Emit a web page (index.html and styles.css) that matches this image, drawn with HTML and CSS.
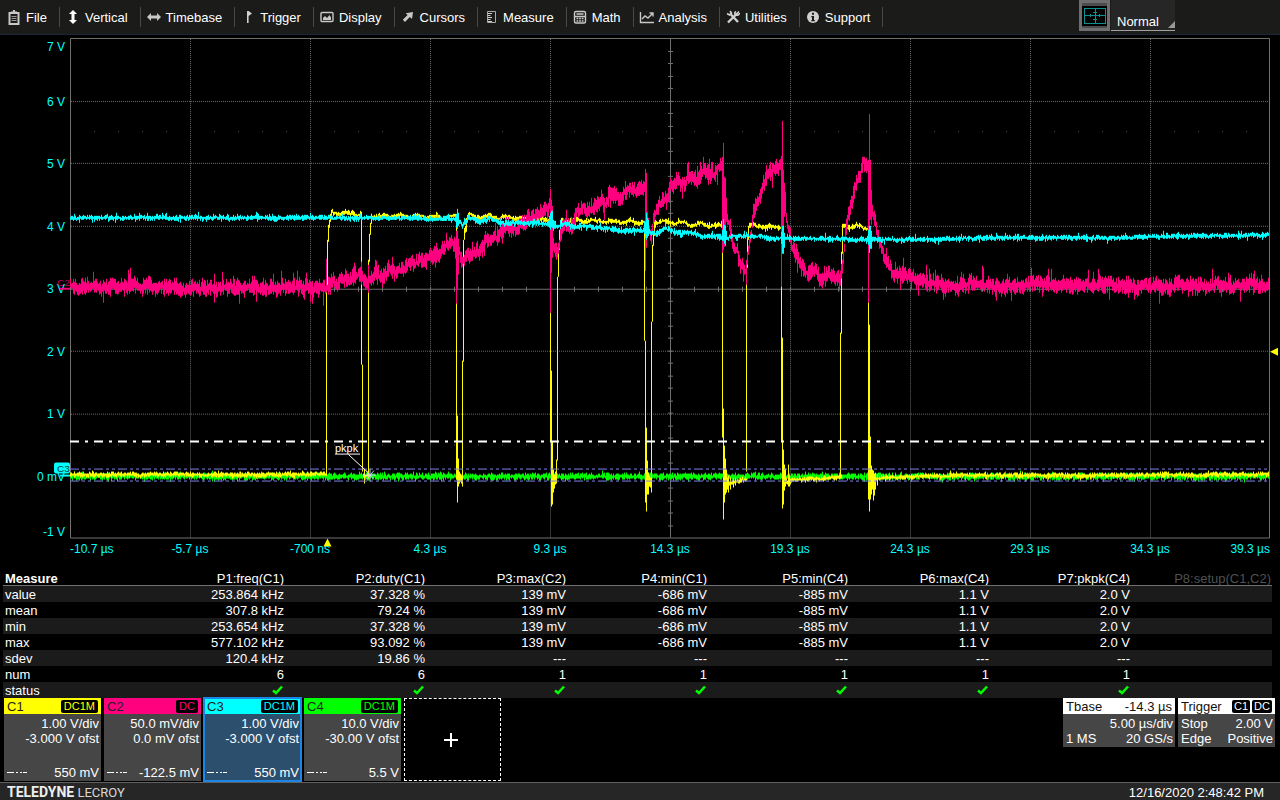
FILE: index.html
```html
<!DOCTYPE html>
<html lang="en">
<head>
  <meta charset="UTF-8">
  <meta name="viewport" content="width=device-width, initial-scale=1.0">
  <title>Oscilloscope</title>
  <link rel="stylesheet" href="styles.css">
</head>
<body>
  <header class="topbar">
    <nav class="menu">
      <button><svg class="icon" viewBox="0 0 16 16"><path d="M3.500 4h9v11h-9z" fill="none" stroke="#c8c8c8" stroke-width="2"/><path d="M5 2.500h6v2H5zM7 1h2v2H7z" fill="#c8c8c8"/><path d="M5.500 7.500h5M5.500 9.500h5M5.500 11.500h5" fill="none" stroke="#999"/></svg>File</button>
      <button><svg class="icon" viewBox="0 0 16 16"><path d="M8 1l4 4H9.500v6H12l-4 4-4-4h2.500V5H4z" fill="#fff"/></svg>Vertical</button>
      <button><svg class="icon" viewBox="0 0 16 16"><path d="M1 8l4-4v2.500h6V4l4 4-4 4V9.500H5V12z" fill="#c8c8c8"/></svg>Timebase</button>
      <button><svg class="icon" viewBox="0 0 16 16"><path d="M7 2h1.600l3.400 2.500L8.600 7v7H7z" fill="#d0d0d0"/></svg>Trigger</button>
      <button><svg class="icon" viewBox="0 0 16 16"><rect x="2" y="3.500" width="12" height="9" rx="1" fill="none" stroke="#c8c8c8" stroke-width="1.400"/><path d="M4 11V9l2-2 2 2 2.500-3L12 8.500V11z" fill="#c8c8c8"/></svg>Display</button>
      <button><svg class="icon" viewBox="0 0 16 16"><path d="M13 3l-1 7-2.200-2.100L5 13l-2.200-2.200L7.600 6 5.700 4.200z" fill="#c8c8c8"/></svg>Cursors</button>
      <button><svg class="icon" viewBox="0 0 16 16"><path d="M4.500 2.500h8v11h-8z" fill="none" stroke="#aaa"/><path d="M5 4.500h4M5 6.500h2.500M5 8.500h4M5 10.500h2.500M5 12.500h4" stroke="#d0d0d0"/></svg>Measure</button>
      <button><svg class="icon" viewBox="0 0 16 16"><rect x="2.500" y="2.500" width="11" height="11.500" rx="1.500" fill="none" stroke="#c8c8c8" stroke-width="1.400"/><path d="M4.500 5h7M3 7.500h10" stroke="#c8c8c8" stroke-width="1.300"/><path d="M4.500 9.500h7M4.500 12h7" stroke="#c8c8c8" stroke-width="1.600" stroke-dasharray="1.800 .8"/></svg>Math</button>
      <button><svg class="icon" viewBox="0 0 16 16"><path d="M1.500 3v10.500H15M3 10l3-3 3 2 4.500-4.500M10.500 4H14v3.500" fill="none" stroke="#c8c8c8" stroke-width="1.400"/></svg>Analysis</button>
      <button><svg class="icon" viewBox="0 0 16 16"><path d="M3 13.500L12 4.500M5 4.500l8 8.500" stroke="#d0d0d0" stroke-width="2.400"/><path d="M14 2.500L11.500 5M2 4.500l2.500 1.500 2-2L5 2M11 2.500c-2 1-1.500 3 0 3.500s3 0 3.500-2" fill="none" stroke="#d0d0d0" stroke-width="1.600"/></svg>Utilities</button>
      <button><svg class="icon" viewBox="0 0 16 16"><circle cx="8" cy="8" r="6" fill="#d0d0d0"/><path d="M7 3.800h2v2H7zM6.300 7H9v4h.8v1.200H6.300V11H7V8.200h-.7z" fill="#1b1b19"/></svg>Support</button>
    </nav>
    <div class="mode">
      <button class="grid-button" aria-label="Grid">
        <svg viewBox="0 0 22 16" width="22" height="16"><path d="M.5.500h21v15H.500zM11.500 1v14M1 7.500h20M9 4.500h4M9 11.500h4M6.500 6v3M15.500 6v3" fill="none" stroke="#0b8f8f" shape-rendering="crispEdges"/></svg>
      </button>
      <label class="mode-select">
        <select aria-label="Trigger mode">
          <option>Normal</option>
          <option>Auto</option>
          <option>Single</option>
          <option>Stop</option>
        </select>
      </label>
    </div>
  </header>

  <main class="scope">
    <section class="plot">
      <div class="y-axis">
        <span>7 V</span><span>6 V</span><span>5 V</span><span>4 V</span><span>3 V</span><span>2 V</span><span>1 V</span><span>0 mV</span><span>-1 V</span>
      </div>
      <div class="screen">
        <svg id="graph" class="graph" viewBox="70 38 1200 502" preserveAspectRatio="none">
          <g id="grid"></g>
          <g id="traces"></g>
          <g id="markers">
            <path class="level" d="M70 442H1269"/>
            <path class="limit" d="M70 469.500H1269M70 481.500H1269"/>
            <text class="note" x="335" y="452">pkpk</text>
            <path class="note-line" d="M335 454.500H360M348.500 455L368 473"/>
            <path class="star" d="M370 469v13M364 475.500h12M366 471l8 9M374 471l-8 9"/>
            <text class="tag-c2" x="57" y="286">C2</text>
            <path d="M60 289h10" stroke="#ff007f" stroke-width="2"/>
            <rect x="54" y="463" width="16" height="11" rx="2" fill="#00ffff"/>
            <text class="tag-c3" x="57" y="472">C3</text>
            <path d="M60 476h10" stroke="#00ffff" stroke-width="2"/>
            <path d="M1270 352l8-4v8z" fill="#ffff00"/>
            <path d="M327.500 539l4 8h-8z" fill="#ffff00"/>
          </g>
        </svg>
      </div>
    </section>
    <div class="x-axis">
      <span>-10.7 µs</span><span>-5.7 µs</span><span>-700 ns</span><span>4.3 µs</span><span>9.3 µs</span><span>14.3 µs</span><span>19.3 µs</span><span>24.3 µs</span><span>29.3 µs</span><span>34.3 µs</span><span>39.3 µs</span>
    </div>

    <table class="measure">
      <thead>
        <tr>
          <th><span>Measure</span></th>
          <th><span>P1:freq(C1)</span></th>
          <th><span>P2:duty(C1)</span></th>
          <th><span>P3:max(C2)</span></th>
          <th><span>P4:min(C1)</span></th>
          <th><span>P5:min(C4)</span></th>
          <th><span>P6:max(C4)</span></th>
          <th><span>P7:pkpk(C4)</span></th>
          <th class="off"><span>P8:setup(C1,C2)</span></th>
        </tr>
      </thead>
      <tbody>
        <tr><td>value</td><td>253.864 kHz</td><td>37.328 %</td><td>139 mV</td><td>-686 mV</td><td>-885 mV</td><td>1.1 V</td><td>2.0 V</td><td></td></tr>
        <tr><td>mean</td><td>307.8 kHz</td><td>79.24 %</td><td>139 mV</td><td>-686 mV</td><td>-885 mV</td><td>1.1 V</td><td>2.0 V</td><td></td></tr>
        <tr><td>min</td><td>253.654 kHz</td><td>37.328 %</td><td>139 mV</td><td>-686 mV</td><td>-885 mV</td><td>1.1 V</td><td>2.0 V</td><td></td></tr>
        <tr><td>max</td><td>577.102 kHz</td><td>93.092 %</td><td>139 mV</td><td>-686 mV</td><td>-885 mV</td><td>1.1 V</td><td>2.0 V</td><td></td></tr>
        <tr><td>sdev</td><td>120.4 kHz</td><td>19.86 %</td><td>---</td><td>---</td><td>---</td><td>---</td><td>---</td><td></td></tr>
        <tr><td>num</td><td>6</td><td>6</td><td>1</td><td>1</td><td>1</td><td>1</td><td>1</td><td></td></tr>
        <tr class="status"><td>status</td><td></td><td></td><td></td><td></td><td></td><td></td><td></td><td></td></tr>
      </tbody>
    </table>

    <section class="descriptors">
      <div class="channel c1">
        <div class="head"><span>C1</span><span class="badge">DC1M</span></div>
        <div class="body"><p>1.00 V/div</p><p>-3.000 V ofst</p><p class="trig"><i class="dash"></i>550 mV</p></div>
      </div>
      <div class="channel c2">
        <div class="head"><span>C2</span><span class="badge">DC</span></div>
        <div class="body"><p>50.0 mV/div</p><p>0.0 mV ofst</p><p class="trig"><i class="dash"></i>-122.5 mV</p></div>
      </div>
      <div class="channel c3 selected">
        <div class="head"><span>C3</span><span class="badge">DC1M</span></div>
        <div class="body"><p>1.00 V/div</p><p>-3.000 V ofst</p><p class="trig"><i class="dash"></i>550 mV</p></div>
      </div>
      <div class="channel c4">
        <div class="head"><span>C4</span><span class="badge">DC1M</span></div>
        <div class="body"><p>10.0 V/div</p><p>-30.00 V ofst</p><p class="trig"><i class="dash"></i>5.5 V</p></div>
      </div>
      <button class="add" aria-label="Add trace">
        <svg width="14" height="14" viewBox="0 0 14 14"><path d="M7 0v14M0 7h14" stroke="#fff" stroke-width="2"/></svg>
      </button>
      <div class="info tbase">
        <div class="head"><span>Tbase</span><span>-14.3 µs</span></div>
        <div class="row"><span></span><span>5.00 µs/div</span></div>
        <div class="row"><span>1 MS</span><span>20 GS/s</span></div>
      </div>
      <div class="info trigger">
        <div class="head"><span>Trigger</span><span class="badges"><span class="badge">C1</span><span class="badge">DC</span></span></div>
        <div class="row"><span>Stop</span><span>2.00 V</span></div>
        <div class="row"><span>Edge</span><span>Positive</span></div>
      </div>
    </section>
  </main>

  <footer class="footer">
    <span class="brand"><b>TELEDYNE</b> LECROY</span>
    <time>12/16/2020 2:48:42 PM</time>
  </footer>

  <script src="script.js"></script>
</body>
</html>
```
FILE: styles.css
```css
* {
  box-sizing: border-box;
}
body {
  margin: 0;
  height: 100vh;
  min-height: 600px;
  display: flex;
  flex-direction: column;
  background: #000;
  color: #fff;
  font-family: 'Liberation Sans', Arial, sans-serif;
  font-size: 13px;
}
button, select {
  font: inherit;
  color: inherit;
  background: none;
  border: 0;
  padding: 0;
}

/* top menu */
.topbar {
  display: flex;
  height: 35px;
  background: #1b1b19;
  border-bottom: 1px solid #1b2736;
}
.menu {
  flex: 1;
  display: flex;
  align-items: center;
}
.menu button {
  display: flex;
  align-items: center;
  gap: 4px;
  height: 20px;
  padding: 0 12px 0 6px;
  border-right: 1px solid #484846;
}
.icon {
  width: 16px;
  height: 16px;
}
.menu button + button {
  padding-left: 5px;
}
.mode {
  display: flex;
  gap: 1px;
  height: 31px;
  margin-right: 105px;
}
.grid-button {
  display: flex;
  align-items: center;
  justify-content: center;
  width: 31px;
  background: #000;
  border: 3px solid #6e6e70;
  box-shadow: inset 0 3px #4c4c4e, inset 0 -2px #4c4c4e;
}
.mode-select {
  position: relative;
  width: 64px;
  background: #262626;
  border-bottom: 1px solid #a0a0a0;
}
.mode-select select {
  appearance: none;
  width: 100%;
  height: 100%;
  padding: 12px 0 0 6px;
}
.mode-select::after {
  content: "";
  position: absolute;
  right: 0;
  bottom: 2px;
  border-left: 7px solid transparent;
  border-bottom: 7px solid #999;
}

/* graph */
.scope {
  flex: 1;
  min-height: 0;
  display: flex;
  flex-direction: column;
  padding-top: 3px;
}
.plot {
  flex: 1;
  min-height: 0;
  display: flex;
  padding-right: 10px;
}
.y-axis {
  display: flex;
  flex-direction: column;
  width: 70px;
  padding: 1px 5px 0 0;
  color: #00ffff;
  font-size: 12px;
  line-height: 16px;
}
.y-axis span {
  flex: 2 1 0;
  display: flex;
  align-items: center;
  justify-content: flex-end;
}
.y-axis span:first-child {
  flex-grow: 1;
  align-items: flex-start;
}
.y-axis span:last-child {
  flex-grow: 1;
  align-items: flex-end;
}
.screen {
  flex: 1;
  min-width: 0;
}
.graph {
  display: block;
  width: 100%;
  height: 100%;
  overflow: visible;
}
.x-axis {
  display: flex;
  height: 32px;
  padding: 1px 10px 0 70px;
  color: #00ffff;
  font-size: 12px;
  line-height: 16px;
}
.x-axis span {
  flex: 2 1 0;
  text-align: center;
}
.x-axis span:first-child {
  flex-grow: 1;
  text-align: left;
}
.x-axis span:last-child {
  flex-grow: 1;
  text-align: right;
}
#grid, #traces {
  fill: none;
  shape-rendering: crispEdges;
}
.frame {
  stroke: #707070;
}
.dots {
  stroke: #6a6a6a;
  stroke-dasharray: 1 1;
}
.marks {
  stroke: #555;
  stroke-dasharray: 1 23;
}
.c1-trace { stroke: #ffff00; }
.c2-trace { stroke: #ff007f; }
.c3-trace { stroke: #00ffff; }
.c4-trace { stroke: #00ff00; }
.level {
  stroke: #fff;
  stroke-width: 2;
  stroke-dasharray: 9 6 3 6;
}
.limit {
  stroke: #8080e8;
  stroke-dasharray: 9 3 3 3 3 3;
  shape-rendering: crispEdges;
}
.note {
  fill: #fff;
  font-size: 11px;
}
.note-line {
  fill: none;
  stroke: #fff;
}
.star {
  stroke: #c8d0ff;
}
.tag-c2 {
  fill: #c00060;
  font-size: 10px;
}
.tag-c3 {
  fill: #003a44;
  font-size: 10px;
}

/* measurements */
.measure {
  width: calc(100% - 11px);
  margin-left: 3px;
  table-layout: fixed;
  border-collapse: collapse;
  line-height: 15px;
}
.measure th, .measure td {
  height: 16px;
  padding: 1px 1px 0 0;
  text-align: right;
  font-weight: normal;
  white-space: nowrap;
}
.measure th {
  height: 14px;
  border-bottom: 1px solid #707070;
}
.measure th span {
  display: block;
  height: 12px;
  line-height: 12px;
  overflow: hidden;
}
.measure th:first-child, .measure td:first-child {
  padding-left: 2px;
  text-align: left;
}
.measure th:first-child {
  font-weight: bold;
}
.measure .off {
  color: #505050;
}
.measure tbody tr:nth-child(odd) {
  background: #1b1b1b;
}
.measure td svg {
  display: block;
  margin: 0 0 2px auto;
}

/* descriptor boxes */
.descriptors {
  display: flex;
  align-items: flex-start;
  gap: 3px;
  height: 84px;
  padding: 0 5px 0 4px;
}
.channel {
  display: flex;
  flex-direction: column;
  width: 97px;
  height: 83px;
  background: #464646;
}
.head {
  display: flex;
  align-items: center;
  justify-content: space-between;
  height: 16px;
  padding: 0 3px;
}
.channel .head {
  background: var(--color);
  color: #222;
}
.badge {
  padding: 0 3px;
  border-radius: 2px;
  background: #000;
  color: var(--color);
  font-size: 11px;
  line-height: 13px;
}
.c1 { --color: #ffff00; }
.c2 { --color: #ff007f; }
.c3 { --color: #00ffff; }
.c4 { --color: #00ff00; }
.body {
  flex: 1;
  display: flex;
  flex-direction: column;
  padding: 2px 2px 1px 3px;
  line-height: 15px;
  text-align: right;
  white-space: nowrap;
}
.body p {
  margin: 0;
}
.body .trig {
  display: flex;
  align-items: center;
  justify-content: space-between;
  margin-top: auto;
}
.dash {
  width: 20px;
  height: 1px;
  background: linear-gradient(90deg, #fff 7px, transparent 7px 9px, #fff 9px 11px, transparent 11px 13px, #fff 13px 15px, transparent 15px 16px, #fff 16px);
}
.selected {
  background: #2c4f6e;
  outline: 2px solid #1c86e6;
  outline-offset: -1px;
}
.add {
  display: flex;
  align-items: center;
  justify-content: center;
  width: 97px;
  height: 83px;
  padding-right: 3px;
  border: 1px dashed #fff;
}
.info {
  height: 49px;
  background: #464646;
  line-height: 15px;
}
.info .head {
  background: #fff;
  color: #111;
}
.info .row {
  display: flex;
  justify-content: space-between;
  padding: 0 2px 0 3px;
}
.info .row:nth-child(2) {
  padding-top: 2px;
}
.tbase {
  width: 112px;
  margin-left: auto;
}
.trigger {
  width: 97px;
  --color: #fff;
}
.badges {
  display: flex;
  gap: 2px;
}
.badges .badge {
  padding: 0 2px;
}

.footer {
  display: flex;
  align-items: center;
  justify-content: space-between;
  height: 18px;
  padding: 1px 16px 0 7px;
  background: #262626;
  border-top: 1px solid #606060;
}
.brand {
  color: #d8d8d8;
  font-family: Roboto, sans-serif;
  font-size: 13px;
}
.brand b {
  color: #eee;
  font-size: 14px;
}
```
FILE: script.js
```js
const NS = 'http://www.w3.org/2000/svg';
const grid = document.getElementById('grid');
const traces = document.getElementById('traces');

function addPath(parent, className, d) {
  const p = document.createElementNS(NS, 'path');
  p.setAttribute('class', className);
  p.setAttribute('d', d);
  parent.appendChild(p);
}

// fixed seed so the noise looks the same on every load
let seed = 20201216;
function rnd() {
  seed = (seed * 1664525 + 1013904223) % 4294967296;
  return seed / 4294967296;
}

function drawGrid() {
  let dots = '', ticks = '';
  for (let i = 1; i < 10; i++) if (i !== 5) dots += `M${70.5 + i * 120} 39V538`;
  [101, 163, 226, 351, 414, 476].forEach(y => { dots += `M71 ${y + 0.5}H1269`; });
  for (let i = 1; i < 50; i++) ticks += `M${70.5 + i * 24} 287V292`;
  for (let i = 1; i < 40; i++) ticks += `M668 ${Math.round(38 + i * 12.5) + 0.5}H673`;
  addPath(grid, 'dots', dots);
  addPath(grid, 'marks', 'M94 131.500H1269M94 445.500H1269');
  addPath(grid, 'frame', 'M70.500 38.500H1269.500V538.500H70.500ZM70 289.500H1269M670.500 38V538' + ticks);
}

// linear interpolation over [x, y] points
function at(points, x) {
  let i = 1;
  while (i < points.length - 1 && points[i][0] < x) i++;
  const [x0, y0] = points[i - 1];
  const [x1, y1] = points[i];
  const t = Math.min(1, Math.max(0, (x - x0) / (x1 - x0)));
  return y0 + (y1 - y0) * t;
}

// one noisy min/max column for every pixel, drift makes the centre wander
function noisy(points, from, to, base, extra, wobble, drift) {
  let d = '';
  let walk = 0;
  for (let x = from; x <= to; x++) {
    let y = at(points, x);
    if (wobble) y += Math.sin(x / 2.8) * wobble;
    if (drift) {
      walk = walk * 0.75 + (rnd() - 0.5) * drift;
      y += walk;
    }
    const up = rnd() < 0.12 ? extra * rnd() : 0;
    const down = rnd() < 0.12 ? extra * rnd() : 0;
    const top = Math.round(y - base * (0.3 + rnd()) - up);
    const bottom = Math.max(top + 2, Math.round(y + base * (0.3 + rnd()) + down));
    d += `M${x + 0.5} ${top}V${bottom}`;
  }
  return d;
}

function bars(list) {
  return list.map(([x, a, b]) => `M${x + 0.5} ${a}V${b}`).join('');
}

drawGrid();

// C4
addPath(traces, 'c4-trace', noisy([[70, 477], [1269, 477]], 70, 1268, 3, 2));

// C1
const high = [[332, 213], [361, 214], [371, 216], [400, 216], [456, 218], [468, 216], [530, 219], [565, 220],
  [640, 223], [665, 222], [690, 225], [720, 226], [755, 226], [780, 227], [845, 226], [867, 228]];
const low = [[70, 475], [326, 475], [363, 476], [457, 480], [552, 482], [647, 482], [724, 486], [732, 483],
  [746, 480], [783, 482], [800, 480], [841, 478], [870, 482], [882, 478], [950, 476], [1269, 475]];
let c1 = '';
[[332, 361], [371, 456], [467, 549], [562, 643], [656, 721], [749, 780], [843, 867]].forEach(([a, b]) => {
  c1 += noisy(high, a, b, 2, 3, 1.2, 1);
});
[[70, 326], [363, 368], [458, 462], [552, 556], [647, 651], [724, 746], [783, 841], [870, 1268]].forEach(([a, b]) => {
  c1 += noisy(low, a, b, 2.2, 2, 0, 0.8);
});
c1 += bars([
  [326, 285, 476], [327, 240, 290], [328, 225, 242], [329, 220, 228], [330, 214, 222], [331, 210, 216],
  [361, 214, 365], [362, 365, 472], [364, 470, 484],
  [368, 260, 476], [369, 234, 262], [370, 223, 235], [371, 214, 224],
  [456, 222, 480], [457, 416, 503], [458, 459, 487], [459, 472, 484], [460, 474, 482], [461, 476, 484], [462, 361, 487],
  [463, 240, 362], [464, 228, 240], [465, 226, 233], [466, 218, 232],
  [550, 224, 442], [551, 371, 507], [552, 442, 505], [553, 470, 493], [554, 475, 489], [555, 472, 485],
  [556, 460, 484], [557, 277, 461], [558, 249, 277], [559, 230, 250], [560, 222, 234], [561, 218, 226],
  [644, 225, 341], [645, 341, 503], [646, 428, 512], [647, 461, 495], [648, 473, 495], [649, 476, 487], [650, 478, 488],
  [651, 322, 493], [652, 245, 322], [653, 234, 246], [654, 221, 236], [655, 220, 228],
  [722, 228, 438], [723, 409, 520], [724, 446, 503], [725, 459, 495], [726, 470, 493], [727, 478, 490],
  [728, 476, 493], [730, 478, 490], [733, 478, 488],
  [746, 266, 472], [747, 235, 268], [748, 226, 240],
  [781, 230, 442], [782, 338, 509], [783, 450, 505], [784, 465, 491], [785, 469, 487], [786, 478, 484], [788, 465, 487], [789, 476, 487],
  [840, 333, 478], [841, 252, 334], [842, 224, 254],
  [868, 228, 500], [869, 325, 512], [870, 437, 500], [871, 466, 495], [872, 470, 490], [873, 471, 501],
  [874, 474, 496], [875, 473, 490], [877, 474, 486]
]);
addPath(traces, 'c1-trace', c1);

// C2
const c2 = [[70, 287], [326, 288], [330, 283], [345, 280], [360, 275], [368, 281], [375, 274], [382, 278], [390, 269],
  [402, 271], [410, 260], [415, 263], [430, 255], [440, 250], [455, 243], [458, 246], [462, 262], [466, 253],
  [480, 253], [485, 240], [497, 241], [502, 230], [515, 232], [520, 225], [530, 220], [540, 215], [549, 207],
  [551, 230], [554, 250], [557, 252], [560, 237], [565, 223], [572, 227], [577, 210], [583, 208], [588, 215],
  [593, 205], [598, 202], [603, 206], [610, 197], [618, 198], [627, 191], [633, 192], [640, 188], [645, 187],
  [647, 218], [651, 234], [653, 218], [657, 210], [662, 203], [666, 204], [670, 187], [677, 182], [682, 187],
  [687, 177], [697, 180], [705, 169], [712, 175], [717, 168], [722, 165], [725, 210], [730, 227], [733, 243],
  [737, 250], [740, 265], [745, 272], [748, 247], [751, 233], [753, 213], [757, 206], [762, 190], [767, 175],
  [773, 168], [781, 164], [784, 195], [787, 220], [790, 237], [793, 250], [798, 260], [807, 274], [815, 272],
  [820, 279], [830, 277], [840, 281], [843, 257], [845, 235], [848, 213], [852, 197], [857, 180], [860, 173],
  [863, 162], [867, 162], [870, 195], [872, 212], [875, 225], [880, 243], [883, 255], [887, 267], [892, 271],
  [907, 278], [930, 281], [955, 287], [975, 283], [995, 286], [1100, 285], [1150, 286], [1269, 286]];
addPath(traces, 'c2-trace',
  noisy(c2, 70, 326, 7, 11, 0, 3) + noisy(c2, 327, 890, 7, 9, 0, 4) + noisy(c2, 891, 1268, 7, 11, 0, 3) +
  bars([[326, 259, 291], [361, 262, 282], [368, 265, 293], [456, 231, 304], [457, 231, 290], [458, 240, 275],
    [550, 189, 313], [551, 200, 273], [552, 206, 258], [645, 169, 271], [646, 173, 248], [722, 157, 253], [723, 143, 250],
    [724, 177, 247], [725, 178, 230], [746, 260, 285], [781, 156, 287], [782, 121, 240], [783, 170, 230], [784, 183, 217],
    [868, 160, 303], [869, 114, 240], [870, 160, 220], [871, 190, 225]]));

// C3
const c3 = [[70, 218], [380, 218], [455, 219], [462, 224], [468, 218], [480, 222], [490, 219], [500, 222], [548, 224],
  [556, 227], [566, 224], [575, 228], [586, 226], [600, 228], [625, 231], [640, 230], [655, 233], [665, 229],
  [680, 234], [690, 232], [700, 236], [715, 236], [722, 238], [745, 236], [760, 236], [770, 239], [790, 239],
  [900, 240], [1000, 238], [1100, 238], [1200, 236], [1269, 235]];
addPath(traces, 'c3-trace',
  noisy(c3, 70, 459, 2.2, 3, 0, 0.6) + noisy(c3, 460, 720, 2.6, 3, 0, 1.2) + noisy(c3, 721, 1268, 2.2, 3, 0, 0.6) +
  bars([[456, 214, 228], [457, 209, 229], [458, 213, 226], [549, 216, 228], [550, 213, 230], [551, 211, 227], [552, 211, 228],
    [553, 220, 231], [644, 221, 234], [645, 222, 238], [646, 213, 240], [647, 218, 238], [648, 220, 236],
    [722, 230, 240], [723, 219, 238], [724, 225, 244], [725, 226, 246], [726, 231, 240], [781, 232, 244],
    [782, 226, 254], [783, 226, 254], [784, 233, 248], [868, 230, 245], [869, 226, 253], [870, 226, 249], [871, 231, 249]]));

// green ticks in the status row
document.querySelectorAll('.status td').forEach((td, i) => {
  if (i > 0 && i < 8) {
    td.innerHTML = '<svg width="12" height="10" viewBox="0 0 12 10"><path d="M1 5.500l3 2.500 6-6.500" fill="none" stroke="#00ff00" stroke-width="2.500"/></svg>';
  }
});
```
